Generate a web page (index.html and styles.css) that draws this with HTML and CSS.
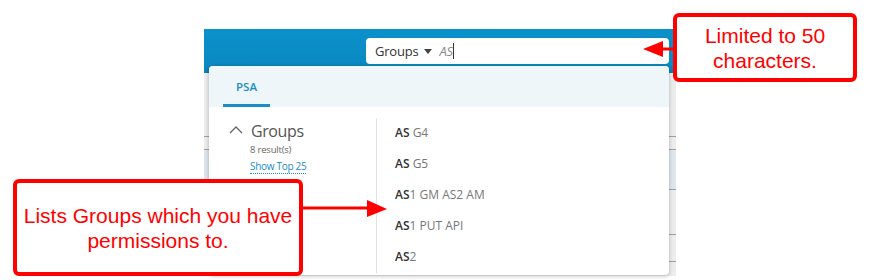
FILE: index.html
```html
<!DOCTYPE html>
<html>
<head>
<meta charset="utf-8">
<link rel="stylesheet" href="styles.css">
</head>
<body>
<div class="stage">
  <div class="app">
    <header class="appbar">
      <div class="search">
        <span class="scope">Groups</span>
        <span class="tri"></span>
        <span class="query">AS</span><span class="caret"></span>
      </div>
    </header>
    <div class="table">
      <div class="row r1"></div>
      <div class="row r2"></div>
      <div class="row r3"></div>
      <div class="row r4"></div>
      <div class="row r5"></div>
      <div class="row r6"></div>
      <div class="row r7"><span class="cell">00001</span></div>
    </div>
    <div class="dropdown">
      <div class="tabs"><div class="tab">PSA</div></div>
      <div class="dd-body">
        <div class="cat">
          <div class="cat-title">
            <svg class="chev" width="14" height="9" viewBox="0 0 14 9"><path d="M1 8 L7 2 L13 8" fill="none" stroke="#666" stroke-width="1.3"/></svg>
            <span>Groups</span>
          </div>
          <div class="count">8 result(s)</div>
          <div class="showtop"><span>Show Top 25</span></div>
        </div>
        <ul class="results">
          <li><b>AS</b> G4</li>
          <li><b>AS</b> G5</li>
          <li><b>AS</b>1 GM AS2 AM</li>
          <li><b>AS</b>1 PUT API</li>
          <li><b>AS</b>2</li>
        </ul>
      </div>
    </div>
  </div>

  <div class="callout callout-top">Limited to 50<br>characters.</div>
  <svg class="arrow arrow-top" width="36" height="20" viewBox="0 0 36 20">
    <line x1="20" y1="9" x2="36" y2="9" stroke="#f00" stroke-width="3"/>
    <polygon points="3,9 23,1 23,17" fill="#f00"/>
  </svg>

  <div class="callout callout-left">Lists Groups which you have<br>permissions to.</div>
  <svg class="arrow arrow-left" width="90" height="20" viewBox="0 0 90 20">
    <line x1="0" y1="9" x2="70" y2="9" stroke="#f00" stroke-width="3"/>
    <polygon points="87,10 67,1 67,18" fill="#f00"/>
  </svg>
</div>
</body>
</html>
```

FILE: styles.css
```css
* { box-sizing: border-box; }
html, body { margin: 0; padding: 0; background: #fff; }
body { font-family: "Open Sans", "Noto Sans", sans-serif; }

.stage {
  position: relative;
  width: 869px;
  height: 280px;
  overflow: hidden;
}

.app {
  position: relative;
  margin-left: 204px;
  padding-top: 29px;
  width: 472px;
}

.appbar {
  height: 44px;
  background: linear-gradient(#0b91cb, #0a89c2 80%, #0880b8);
  padding: 9px 0 0 162px;
}

.search {
  width: 303px;
  height: 26px;
  background: #fff;
  border-radius: 4px;
  display: flex;
  align-items: center;
  padding-left: 9px;
  font-size: 13px;
  letter-spacing: -0.2px;
}
.scope { color: #333; }
.tri {
  width: 0; height: 0;
  border-left: 4px solid transparent;
  border-right: 4px solid transparent;
  border-top: 5px solid #444;
  margin: 1px 8px 0 5px;
}
.query { color: #888; font-style: italic; }
.caret { width: 1px; height: 16px; background: #333; margin-left: 0; }

.table { background: #ededed; }
.row { border-bottom: 1px solid #a0a0a0; }
.r1 { height: 64px; }
.r2 { height: 13px; }
.r3 { height: 40px; background: #dde7ed; }
.r4 { height: 45px; }
.r5 { height: 27px; }
.r6 { height: 14px; border-bottom: none; }
.r7 { height: 20px; background: #fff; padding-left: 72px; }
.cell { font-size: 11px; color: #333; line-height: 18px; position: relative; top: 2px; }

.dropdown {
  position: absolute;
  left: 5px;
  top: 66px;
  width: 460px;
  height: 209px;
  background: #fff;
  border-radius: 4px;
  box-shadow: 0 1px 4px rgba(0,0,0,0.25);
  overflow: hidden;
}

.tabs {
  height: 41px;
  background: #eef6fa;
  padding-left: 14px;
  display: flex;
}
.tab {
  width: 47px;
  height: 41px;
  border-bottom: 3px solid #1a8dc6;
  color: #1a8dc6;
  font-size: 11.5px;
  font-weight: 600;
  display: flex;
  align-items: center;
  justify-content: center;
  padding-top: 2px;
}

.dd-body { display: flex; height: 168px; }

.cat {
  width: 167px;
  padding: 14px 0 0 20px;
}
.cat-title {
  display: flex;
  align-items: center;
  font-size: 16px;
  letter-spacing: -0.4px;
  line-height: 20px;
  color: #555;
}
.chev { margin-right: 8px; margin-top: -3px; }
.count {
  font-size: 9.5px;
  letter-spacing: -0.2px;
  color: #666;
  line-height: 14px;
  margin: 2px 0 0 21px;
}
.showtop {
  margin: 2px 0 0 21px;
  font-size: 10px;
  letter-spacing: -0.3px;
  line-height: 15px;
}
.showtop span {
  color: #1a8dc6;
  border-bottom: 1px dotted #1a8dc6;
}

.results {
  list-style: none;
  margin: 11px 0 2px 0;
  padding: 0 0 0 18px;
  border-left: 1px solid #e3e3e3;
  flex: 1;
}
.results li {
  font-size: 12px;
  line-height: 31px;
  color: #777;
}
.results li:first-child { margin-top: -1px; }
.results b { color: #333; font-weight: 600; }

.callout {
  position: absolute;
  border: 4px solid #f00;
  border-radius: 6px;
  background: #fff;
  color: #f00;
  font-family: "Liberation Sans", Arial, sans-serif;
  font-size: 21px;
  line-height: 25px;
  text-align: center;
  display: flex;
  align-items: center;
  justify-content: center;
}
.callout-top { left: 673px; top: 13px; width: 184px; height: 69px; }
.callout-left { left: 13px; top: 179px; width: 290px; height: 97px; padding-top: 1px; }

.arrow { position: absolute; }
.arrow-top { left: 640px; top: 40px; }
.arrow-left { left: 300px; top: 199px; }
```
